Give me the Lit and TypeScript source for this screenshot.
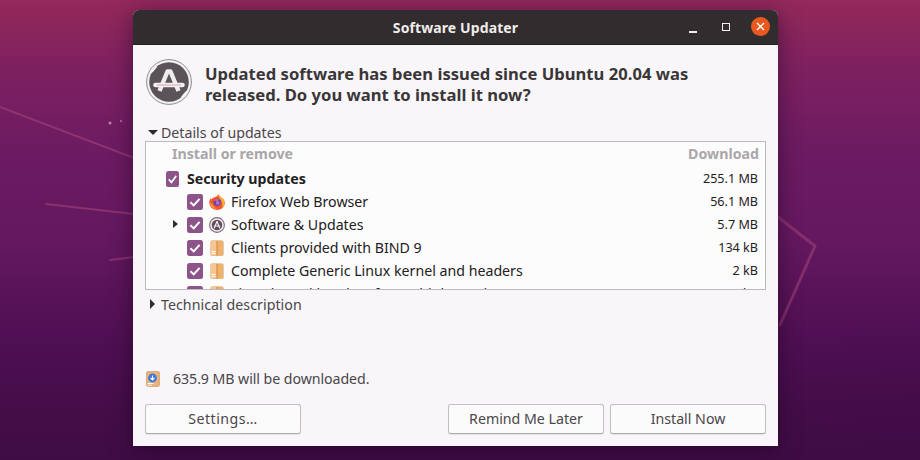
import { LitElement, html, css, svg } from "lit";
import { customElement } from "lit/decorators.js";

const checkMark = svg`<rect width="16" height="16" rx="2.5" fill="#8c5488"/><path d="M3.4 8.2 6.7 11.4 12.6 4.8" fill="none" stroke="#fff" stroke-width="2"/>`;
const check = html`<svg class="cb" viewBox="0 0 16 16" preserveAspectRatio="none">${checkMark}</svg>`;

const fox = html`<svg class="ic" viewBox="0 0 16 16">
  <path d="M9.4 0C9.8 1.6 11 2.4 12.2 3.2 14.6 4.8 16 7 15.8 9.6 15.4 13.4 12 16 8 16 3.6 16 .3 12.6.3 8.6.3 7 .8 5.4 1.7 4.2L2.6 5.4C3.2 3.8 5 3.2 6.6 3 7.8 2.4 9 1.4 9.4 0Z" fill="#f0582c"/>
  <path d="M9.4 0C9.8 1.6 11 2.4 12.2 3.2 14.6 4.8 16 7 15.8 9.6 15.4 11.4 14.4 12.8 13 13.8 13.8 11.2 13.4 7.6 11.2 5.4 10 4.2 9.2 2 9.4 0Z" fill="#fbae2f"/>
  <path d="M1 8.6C1.4 12 4.4 15 8 15 6 14 4.2 12.6 3.4 10.8 2.6 10 1.6 9.4 1 8.6Z" fill="#fbb03a"/>
  <circle cx="8.2" cy="8.2" r="3.7" fill="#6f3bb0"/>
  <path d="M4.4 6.6C5.8 4.8 8.4 4.4 10.4 5.6L8.8 7C7.4 6.8 5.8 6.8 4.4 6.6Z" fill="#f26a35"/>
  <circle cx="8.7" cy="8.8" r="1.9" fill="#a873dd"/>
</svg>`;

const updaterSmall = html`<svg class="ic" viewBox="0 0 16 16">
  <circle cx="8" cy="8" r="7.4" fill="#f4f0f3" stroke="#86657f" stroke-width="1.1"/>
  <circle cx="8" cy="8" r="5.3" fill="#5f4f59"/>
  <path d="M8 4.2 5.2 11.4M8 4.2 10.8 11.4M4.8 9H11.2" stroke="#f4eff2" stroke-width="1.2" fill="none"/>
</svg>`;

const pkg = html`<svg class="ic" viewBox="0 0 16 16">
  <rect x="1.5" y="0.5" width="13" height="15.5" rx="2" fill="#efb170" stroke="#d9c3a4" stroke-width=".6"/>
  <rect x="2" y="1" width="5.5" height="14.5" rx="1.2" fill="#f6c591"/>
  <rect x="7.5" y="1" width="1.2" height="14.5" fill="#d98f45"/>
  <rect x="2.6" y="11" width="4" height="1" fill="#fff"/>
  <rect x="2.6" y="13" width="4" height="1" fill="#fff"/>
</svg>`;

@customElement("app-root")
export class AppRoot extends LitElement {
  static styles = css`
    :host {
      display: block;
      position: relative;
      width: 920px;
      height: 460px;
      overflow: hidden;
      padding: 10px 0 0 133px;
      box-sizing: border-box;
      font-family: "Noto Sans", "Open Sans", sans-serif;
      background:
        radial-gradient(ellipse 420px 160px at 120% 100%, rgba(60, 10, 70, 0.5), transparent),
        linear-gradient(180deg, #94295a 0%, #7f2160 14%, #6d1b62 32%, #64185f 52%, #4f0f53 74%, #450d49 88%, #3f0c45 100%);
    }
    .deco {
      position: absolute;
      inset: 0;
      width: 920px;
      height: 460px;
      filter: blur(0.5px);
    }
    .window {
      position: relative;
      width: 645px;
      height: 436px;
      display: flex;
      flex-direction: column;
      background: #f8f6f9;
      border-radius: 6px 6px 0 0;
      box-shadow: 0 4px 22px rgba(20, 0, 25, 0.5);
      overflow: hidden;
    }
    .titlebar {
      height: 35px;
      flex: none;
      display: flex;
      align-items: center;
      justify-content: center;
      position: relative;
      background: #312c2d;
      border-bottom: 1px solid #242021;
      box-sizing: border-box;
      color: #f0ecec;
      font-size: 14px;
      font-weight: 700;
      letter-spacing: 0.1px;
    }
    .controls {
      position: absolute;
      right: 8px;
      top: 7px;
      display: flex;
      align-items: center;
      gap: 18px;
    }
    .min {
      width: 8px;
      height: 2px;
      background: #f2eeee;
      margin: 10px 7px 0 0;
    }
    .max {
      width: 6px;
      height: 6px;
      border: 1px solid #f4f0f0;
      margin-right: 3px;
    }
    .close {
      width: 19px;
      height: 19px;
      border-radius: 50%;
      background: #e9591f;
      display: flex;
      align-items: center;
      justify-content: center;
    }
    .close svg {
      width: 9px;
      height: 9px;
    }
    .content {
      flex: 1;
      display: flex;
      flex-direction: column;
      padding: 14px 12px 12px;
      min-height: 0;
      color: #3d3a3d;
    }
    .head {
      display: flex;
      gap: 13px;
      align-items: center;
      height: 46px;
      padding-left: 1px;
    }
    .logo {
      width: 46px;
      height: 46px;
      flex: none;
    }
    h1 {
      margin: 3px 0 0;
      font-size: 16.6px;
      line-height: 21px;
      font-weight: 700;
      color: #3a3638;
      letter-spacing: 0.02px;
    }
    .exp {
      display: flex;
      align-items: center;
      height: 20px;
      font-size: 14.2px;
      color: #4a4649;
      gap: 3px;
    }
    .exp.one {
      margin-top: 17px;
      padding-left: 3px;
    }
    .exp.two {
      margin-top: 4px;
      padding-left: 5px;
      gap: 6px;
      letter-spacing: 0.05px;
    }
    .tri-d {
      width: 0;
      height: 0;
      border-left: 5px solid transparent;
      border-right: 5px solid transparent;
      border-top: 5px solid #2e2b2d;
    }
    .tri-r {
      width: 0;
      height: 0;
      border-top: 5px solid transparent;
      border-bottom: 5px solid transparent;
      border-left: 5px solid #2e2b2d;
    }
    .list {
      height: 149px;
      flex: none;
      box-sizing: border-box;
      border: 1px solid #bdb9bd;
      background: #fdfcfd;
      overflow: hidden;
      margin-top: -1px;
    }
    .hdr {
      display: flex;
      justify-content: space-between;
      align-items: center;
      height: 23px;
      padding: 0 6px 0 26px;
      color: #a9a6a9;
      font-weight: 700;
      font-size: 14.2px;
    }
    .row {
      display: flex;
      align-items: center;
      height: 23px;
      font-size: 14.2px;
      color: #232022;
      position: relative;
      padding-left: 41px;
    }
    .row.top {
      padding-left: 20px;
      margin-top: 2px;
      font-weight: 700;
    }
    .row.top .cb {
      margin-right: 8px;
      width: 13px;
      height: 16px;
    }
    .cb {
      width: 16px;
      height: 16px;
      flex: none;
      margin-right: 6px;
    }
    .ic {
      width: 16px;
      height: 16px;
      flex: none;
      margin-right: 6px;
    }
    .row .size {
      margin-left: auto;
      padding-right: 7px;
      font-size: 12.6px;
      font-weight: 400;
    }
    .row .tri-r {
      position: absolute;
      left: 27px;
      top: 7px;
      border-top-width: 4px;
      border-bottom-width: 4px;
    }
    .spacer {
      flex: 1;
    }
    .dl {
      display: flex;
      align-items: center;
      gap: 13px;
      font-size: 14.2px;
      color: #4a4649;
      padding-left: 1px;
      height: 20px;
      margin-bottom: 1px;
      letter-spacing: -0.07px;
    }
    .dl span {
      margin-top: -1px;
    }
    .dl svg {
      width: 14px;
      height: 16px;
    }
    .buttons {
      display: flex;
      margin-top: 14px;
      gap: 6px;
    }
    button {
      width: 156px;
      height: 30px;
      box-sizing: border-box;
      border: 1px solid #c3bfc3;
      border-bottom-color: #aeaaae;
      border-radius: 3px;
      background: #fcfbfc;
      box-shadow: 0 1px 1px rgba(0, 0, 0, 0.08);
      font: inherit;
      font-size: 14.2px;
      color: #4a4649;
      padding: 0 0 2px;
    }
    button.first {
      margin-right: auto;
      letter-spacing: 0.5px;
    }
  `;

  render() {
    const rows: [unknown, string, string, boolean][] = [
      [fox, "Firefox Web Browser", "56.1 MB", false],
      [updaterSmall, "Software & Updates", "5.7 MB", true],
      [pkg, "Clients provided with BIND 9", "134 kB", false],
      [pkg, "Complete Generic Linux kernel and headers", "2 kB", false],
      [pkg, "Linux kernel headers for multiple versions", "1 kB", false],
    ];
    return html`
      <svg class="deco" viewBox="0 0 920 460" fill="none" stroke-linecap="round">
        <g stroke="#a9457e" stroke-opacity=".55" stroke-width="2">
          <path d="M0 107 134 158" />
          <path d="M46 204 134 214" />
          <path d="M110 260 134 257" />
          <path d="M778 217 815 246 780 325" stroke-opacity=".5" stroke-width="3" />
        </g>
        <circle cx="110" cy="123" r="1.5" fill="#c07fb0" />
        <circle cx="121" cy="121" r="1.2" fill="#a9629c" />
      </svg>
      <div class="window">
        <div class="titlebar">
          Software Updater
          <div class="controls">
            <span class="min"></span>
            <span class="max"></span>
            <span class="close">
              <svg viewBox="0 0 9 9"><path d="M1 1 8 8M8 1 1 8" stroke="#fff" stroke-width="1.4" /></svg>
            </span>
          </div>
        </div>
        <div class="content">
          <div class="head">
            <svg class="logo" viewBox="0 0 46 46">
              <circle cx="23" cy="23" r="22.4" fill="#f4f2f3" stroke="#8f8a8d" stroke-width="1" />
              <circle cx="23" cy="23" r="19.8" fill="#5a5358" />
              <path d="M2.6 16 6.8 8.6 11.5 7.5 7 13Z" fill="#f4f2f3" />
              <path d="M43.4 30 39.2 37.4 34.5 38.5 39 33Z" fill="#f4f2f3" />
              <path d="M13.5 32 21.5 12.5H24.5L32.5 32" stroke="#efecee" stroke-width="4.4" fill="none" stroke-linejoin="round" />
              <path d="M9.5 26H36.5" stroke="#f2eff1" stroke-width="4.6" stroke-linecap="round" />
              <path d="M11 26H35" stroke="#d89aa6" stroke-width=".9" />
            </svg>
            <h1>Updated software has been issued since Ubuntu 20.04 was<br />released. Do you want to install it now?</h1>
          </div>
          <div class="exp one"><span class="tri-d"></span>Details of updates</div>
          <div class="list">
            <div class="hdr"><span>Install or remove</span><span>Download</span></div>
            <div class="row top">${check}Security updates<span class="size">255.1 MB</span></div>
            ${rows.map(
              ([icon, name, size, arrow]) => html`
                <div class="row">
                  ${arrow ? html`<span class="tri-r"></span>` : ""}${check}${icon}${name}
                  <span class="size">${size}</span>
                </div>
              `
            )}
          </div>
          <div class="exp two"><span class="tri-r"></span>Technical description</div>
          <div class="spacer"></div>
          <div class="dl">
            <svg viewBox="0 0 14 16">
              <rect x=".4" y=".4" width="13.2" height="15.2" rx="2" fill="#e7b27c" stroke="#c99a68" stroke-width=".7" />
              <circle cx="6.5" cy="7" r="4.4" fill="#3f78dc" />
              <path d="M6.5 4.4V9M4.6 7 6.5 9 8.4 7" stroke="#fff" stroke-width="1.1" fill="none" />
              <rect x="1.6" y="12" width="6" height="1" fill="#fff" />
              <rect x="1.6" y="13.8" width="4" height=".8" fill="#fff" />
            </svg>
            <span>635.9 MB will be downloaded.</span>
          </div>
          <div class="buttons">
            <button class="first">Settings…</button>
            <button>Remind Me Later</button>
            <button>Install Now</button>
          </div>
        </div>
      </div>
    `;
  }
}
